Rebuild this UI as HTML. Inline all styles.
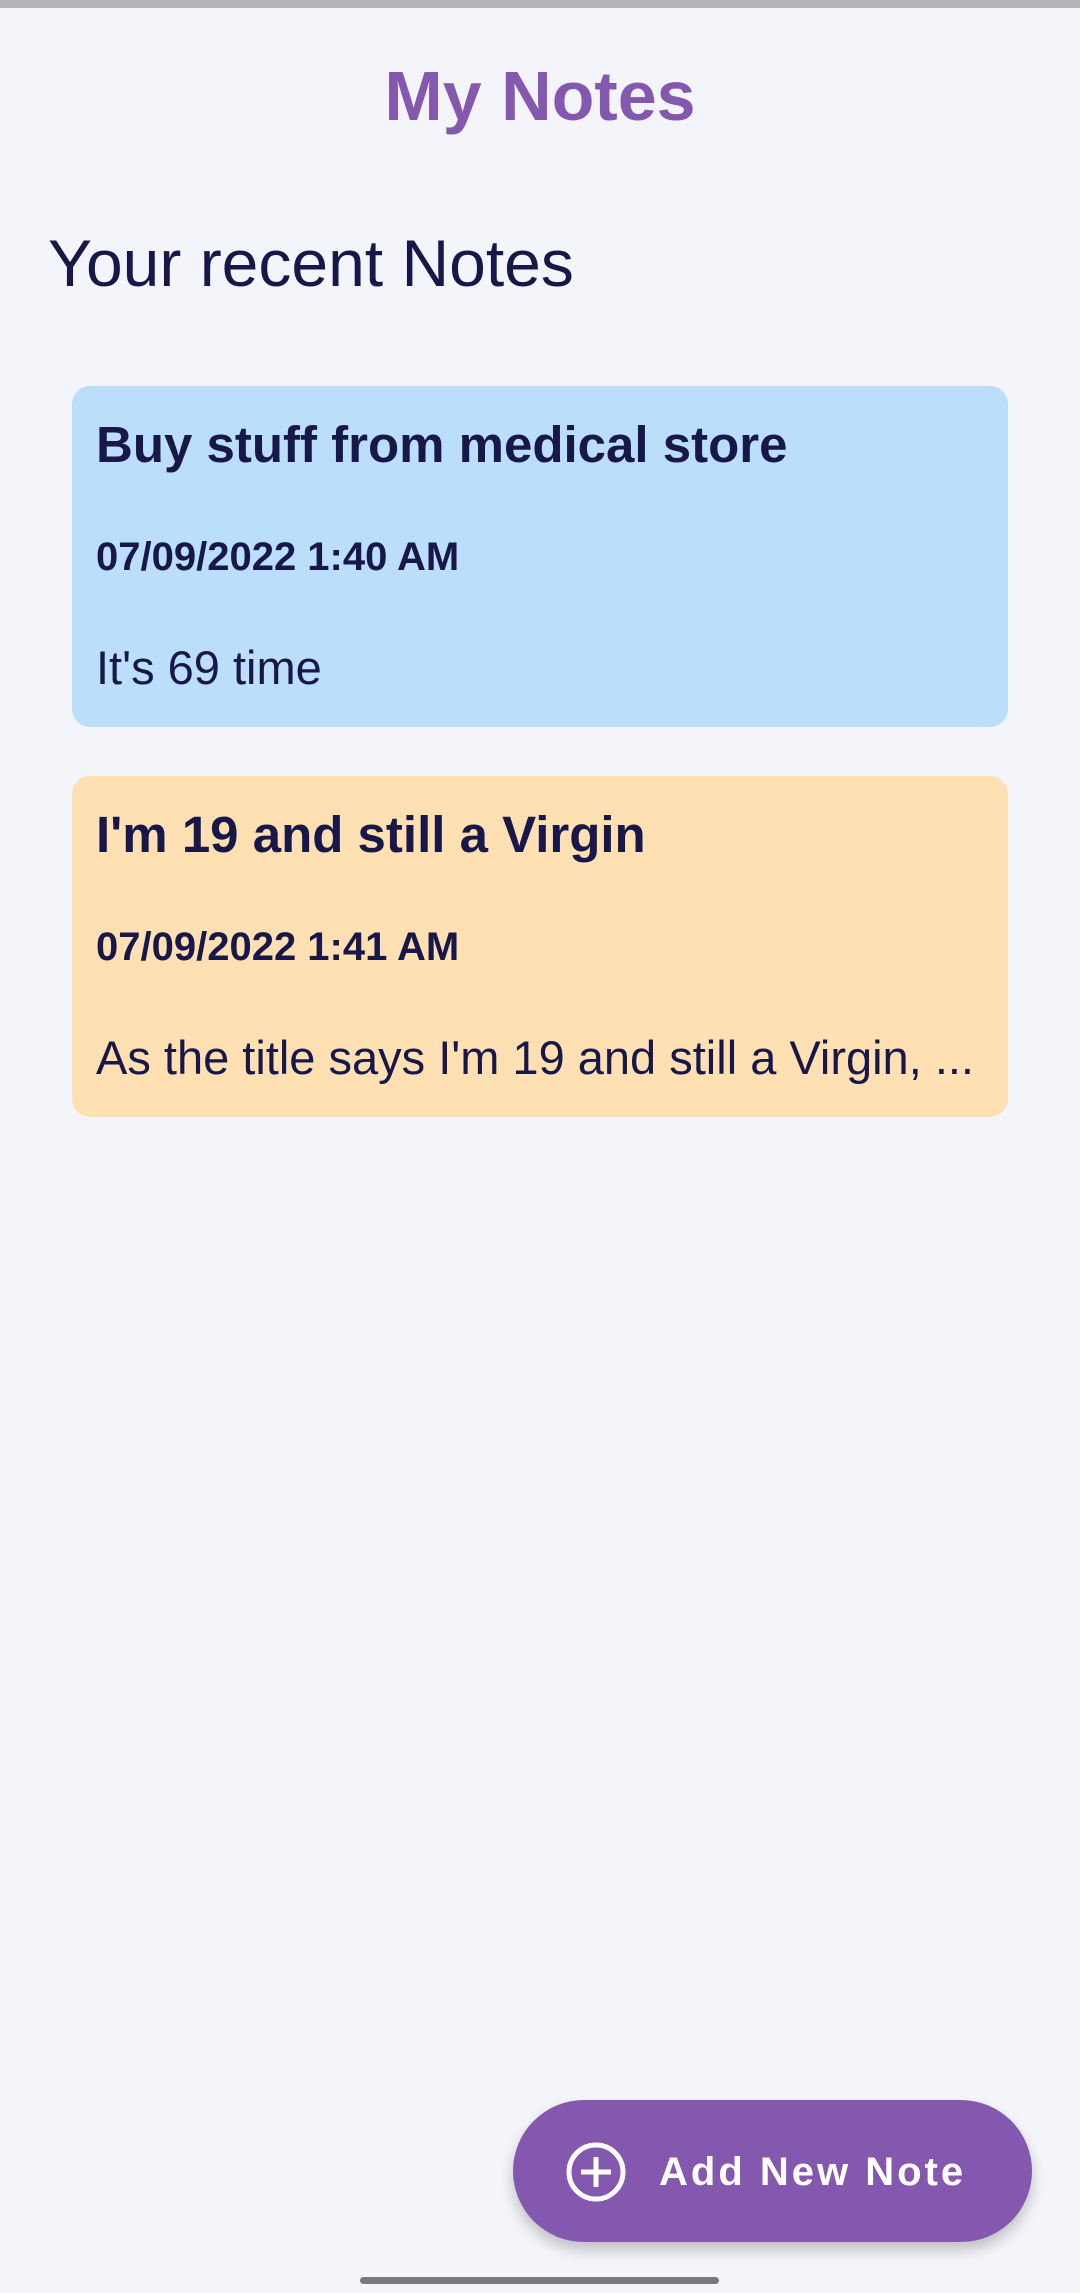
<!DOCTYPE html>
<html><head><meta charset="utf-8"><style>
*{margin:0;padding:0;box-sizing:border-box}
body{width:1080px;height:2293px;background:#f4f5fa;position:relative;overflow:hidden;font-family:"Liberation Sans",sans-serif;color:#17174a}
.a{position:absolute;white-space:nowrap;line-height:1}
.card{position:absolute;left:72px;width:936px;height:341px;border-radius:18px}
.t{left:24px;font-size:51px;font-weight:bold}
.d{left:24px;top:151px;font-size:40px;font-weight:bold}
.b{left:24px;top:258px;font-size:47px;font-weight:300;transform-origin:left top}
</style></head><body>
<div class="a" style="top:0;left:0;width:1080px;height:8px;background:#b6b6b8"></div>
<div class="a" style="top:61px;left:0;width:1080px;text-align:center;font-size:70px;font-weight:bold;color:#8558b0">My Notes</div>
<div class="a" style="top:230px;left:48px;font-size:66px">Your recent Notes</div>
<div class="card" style="top:386px;background:#bbdefa">
<div class="a t" style="top:33px">Buy stuff from medical store</div>
<div class="a d">07/09/2022 1:40 AM</div>
<div class="a b">It's 69 time</div>
</div>
<div class="card" style="top:776px;background:#fee0b2">
<div class="a t" style="top:33px">I'm 19 and still a Virgin</div>
<div class="a d">07/09/2022 1:41 AM</div>
<div class="a b" style="transform:scaleX(1.0)">As the title says I'm 19 and still a Virgin, ...</div>
</div>
<div class="a" style="left:513px;top:2100px;width:519px;height:142px;border-radius:71px;background:#8558b0;box-shadow:0 8px 14px rgba(0,0,0,0.22)">
<svg style="position:absolute;left:52px;top:41px" width="62" height="62" viewBox="0 0 62 62"><circle cx="31" cy="31" r="27" fill="none" stroke="#fff" stroke-width="5"/><path d="M31 16V46M16 31H46" stroke="#fff" stroke-width="5"/></svg>
<div class="a" style="left:146px;top:52px;font-size:40px;font-weight:bold;letter-spacing:3px;color:#fff">Add New Note</div>
</div>
<div class="a" style="left:360px;top:2277px;width:359px;height:7px;border-radius:4px;background:#7a7a7e"></div>
</body></html>
